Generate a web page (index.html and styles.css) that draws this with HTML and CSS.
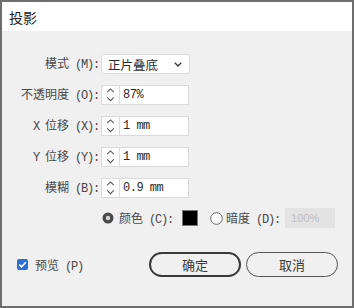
FILE: index.html
```html
<!DOCTYPE html>
<html lang="zh">
<head>
<meta charset="utf-8">
<link rel="stylesheet" href="styles.css">
</head>
<body>
<div class="window">
  <div class="titlebar">投影</div>
  <div class="content">
    <div class="form">
      <div class="lbl">模式<span class="lat"> (M):</span></div>
      <div class="select"><span>正片叠底</span>
        <svg class="chev" width="8" height="5" viewBox="0 0 8 5"><path d="M0.8 0.8 L4 4 L7.2 0.8" fill="none" stroke="#333" stroke-width="1.3"/></svg>
      </div>

      <div class="lbl">不透明度<span class="lat"> (O):</span></div>
      <div class="spin">
        <svg class="arrows" width="18" height="18" viewBox="0 0 18 18"><path d="M5.5 6 L9 2.5 L12.5 6 M5.5 11.5 L9 15 L12.5 11.5" fill="none" stroke="#555" stroke-width="1.1"/></svg>
        <span class="val">87%</span>
      </div>

      <div class="lbl"><span class="lat">X </span>位移<span class="lat"> (X):</span></div>
      <div class="spin">
        <svg class="arrows" width="18" height="18" viewBox="0 0 18 18"><path d="M5.5 6 L9 2.5 L12.5 6 M5.5 11.5 L9 15 L12.5 11.5" fill="none" stroke="#555" stroke-width="1.1"/></svg>
        <span class="val">1 mm</span>
      </div>

      <div class="lbl"><span class="lat">Y </span>位移<span class="lat"> (Y):</span></div>
      <div class="spin">
        <svg class="arrows" width="18" height="18" viewBox="0 0 18 18"><path d="M5.5 6 L9 2.5 L12.5 6 M5.5 11.5 L9 15 L12.5 11.5" fill="none" stroke="#555" stroke-width="1.1"/></svg>
        <span class="val">1 mm</span>
      </div>

      <div class="lbl">模糊<span class="lat"> (B):</span></div>
      <div class="spin">
        <svg class="arrows" width="18" height="18" viewBox="0 0 18 18"><path d="M5.5 6 L9 2.5 L12.5 6 M5.5 11.5 L9 15 L12.5 11.5" fill="none" stroke="#555" stroke-width="1.1"/></svg>
        <span class="val">0.9 mm</span>
      </div>
    </div>

    <div class="color-row">
      <svg class="radio" width="12" height="12" viewBox="0 0 12 12"><circle cx="6" cy="6" r="5.5" fill="#4a4a4a"/><circle cx="6" cy="6" r="2.2" fill="#d8d8d8"/></svg>
      <span class="rlabel">颜色<span class="lat"> (C):</span></span>
      <span class="swatch"></span>
      <svg class="radio radio2" width="13" height="13" viewBox="0 0 13 13"><circle cx="6.5" cy="6.5" r="5.8" fill="#fff" stroke="#666" stroke-width="1"/></svg>
      <span class="rlabel">暗度<span class="lat"> (D):</span></span>
      <span class="disabled">100%</span>
    </div>

    <div class="footer">
      <svg class="check" width="11" height="11" viewBox="0 0 11 11"><rect x="0" y="0" width="11" height="11" rx="2" fill="#2b6fd8"/><path d="M2.3 5.6 L4.5 7.8 L8.8 3.2" fill="none" stroke="#fff" stroke-width="1.6"/></svg>
      <span class="plabel">预览<span class="lat"> (P)</span></span>
      <div class="buttons">
        <button class="btn primary">确定</button>
        <button class="btn">取消</button>
      </div>
    </div>
  </div>
</div>
</body>
</html>
```

FILE: styles.css
```css
* { box-sizing: border-box; margin: 0; padding: 0; }
html, body { margin: 0; width: 354px; height: 308px; overflow: hidden; }
body {
  font-family: "Noto Sans CJK SC", sans-serif;
  font-size: 12px;
  color: #484848;
}
.window {
  width: 354px;
  height: 308px;
  border: 2px solid #6e6e6e;
  background: #f0f0f0;
  display: flex;
  flex-direction: column;
}
.titlebar {
  height: 29px;
  background: #fff;
  font-size: 14px;
  color: #1a1a1a;
  padding-left: 7px;
  display: flex;
  align-items: center;
  flex-shrink: 0;
}
.content { padding-top: 23px; }
.lat {
  font-family: "Liberation Mono", monospace;
  letter-spacing: -1.2px;
}
.form {
  display: grid;
  grid-template-columns: 99px 89px;
  grid-auto-rows: 20px;
  row-gap: 11px;
  align-items: center;
}
.lbl {
  text-align: right;
  padding-right: 2px;
  line-height: 20px;
  white-space: nowrap;
}
.select {
  height: 20px;
  background: #fff;
  border: 1px solid #dcdcdc;
  border-radius: 3px;
  display: flex;
  align-items: center;
  justify-content: space-between;
  padding: 0 7px 0 6px;
  font-size: 12.5px;
  color: #2a2a2a;
}
.spin {
  width: 88px;
  height: 20px;
  display: flex;
  align-items: stretch;
  background: #fff;
  border: 1px solid #dadada;
}
.arrows {
  width: 18px;
  height: 18px;
  border-right: 1px solid #dcdcdc;
  flex-shrink: 0;
}
.val {
  font-family: "Liberation Mono", monospace;
  letter-spacing: -0.5px;
  padding-left: 3px;
  line-height: 18px;
  color: #2a2a2a;
}
.color-row {
  margin-top: 10px;
  height: 20px;
  display: flex;
  align-items: center;
  padding-left: 100px;
}
.radio { flex-shrink: 0; margin-right: 5px; }
.radio2 { margin-left: 12px; margin-right: 3px; }
.rlabel { white-space: nowrap; }
.swatch {
  width: 16px;
  height: 16px;
  background: #000;
  border: 1px solid #777;
  margin-left: 9px;
}
.disabled {
  width: 50px;
  height: 20px;
  margin-left: 5px;
  background: #e3e3e3;
  color: #bdbdbd;
  font-size: 11px;
  line-height: 20px;
  padding-left: 6px;
  font-family: "Liberation Sans", sans-serif;
}
.footer {
  margin-top: 24px;
  display: flex;
  align-items: center;
  padding: 0 14px 0 15px;
}
.check { flex-shrink: 0; margin-right: 7px; }
.plabel { white-space: nowrap; }
.buttons {
  margin-left: auto;
  display: flex;
  gap: 5px;
}
.btn {
  width: 92px;
  height: 25px;
  border-radius: 13px;
  border: 1px solid #555;
  background: transparent;
  font-family: "Noto Sans CJK SC", sans-serif;
  font-size: 13px;
  color: #3a3a3a;
}
.btn.primary { border: 2px solid #3a3a3a; }
```
